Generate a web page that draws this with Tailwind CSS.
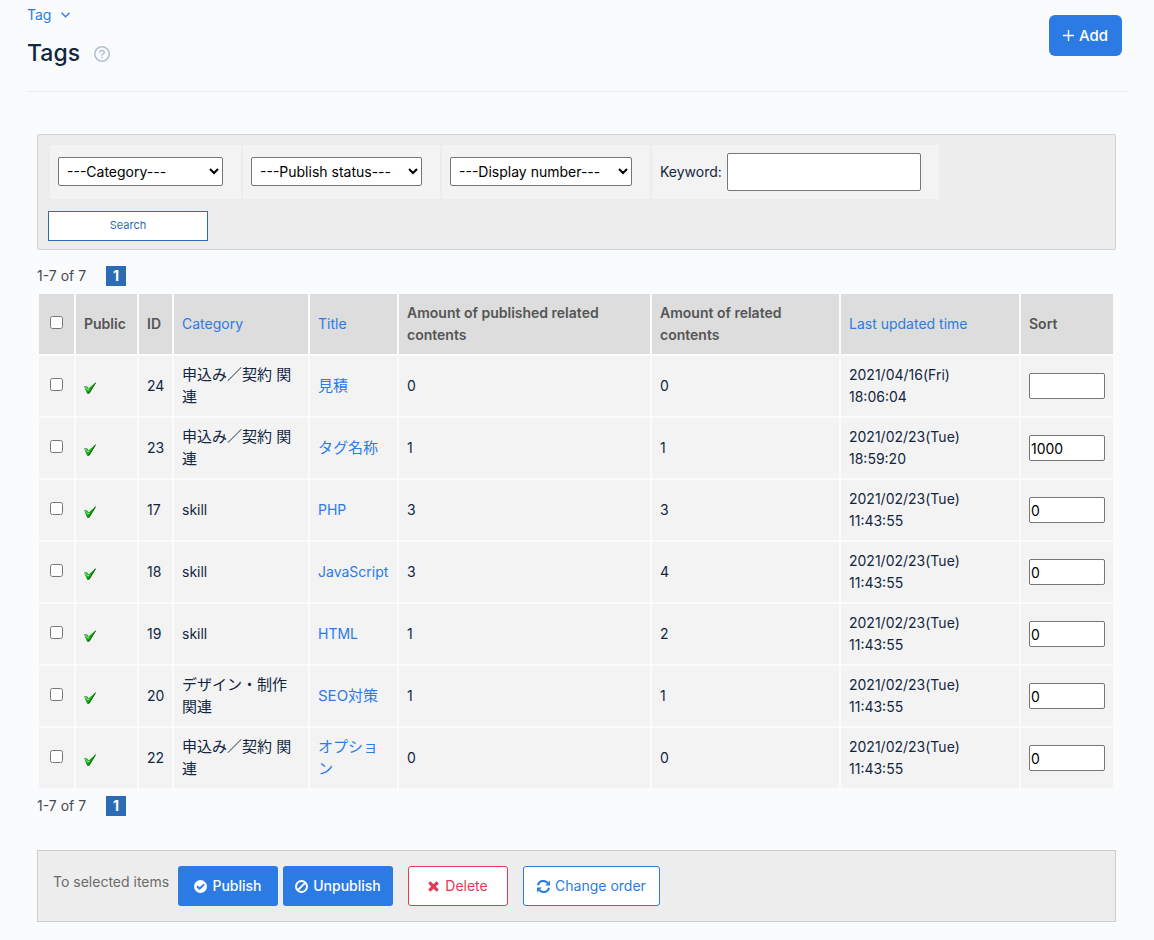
<!DOCTYPE html>
<html lang="en">
  <head>
    <meta charset="UTF-8" />
    <meta name="viewport" content="width=device-width, initial-scale=1.0" />
    <title>Tags</title>
    <script src="https://cdn.jsdelivr.net/npm/@tailwindcss/browser@4"></script>
  </head>
  <body
    class="bg-[#f9fbfd] font-['Inter','Noto_Sans_CJK_JP',sans-serif] text-sm text-[#12263f]"
  >
    <!-- Page header -->
    <header
      class="ml-[27px] mr-[26px] flex h-[92px] items-start justify-between border-b border-[#e3ebf6] pr-[6px]"
    >
      <div>
        <nav class="flex h-[30px] items-center">
          <a href="#" class="flex items-center gap-[10px] text-[#2c7be5]">
            Tag
            <svg class="h-[6px] w-[9px]" viewBox="0 0 9 6" fill="none">
              <path d="M0.5 0.8 4.5 4.8 8.5 0.8" stroke="currentColor" stroke-width="1.3" />
            </svg>
          </a>
        </nav>
        <div class="flex h-[46px] items-center gap-[14px]">
          <h1 class="text-[23px] font-medium">Tags</h1>
          <svg class="mt-[2px] h-4 w-4 text-[#b1c2d9]" viewBox="0 0 16 16" fill="none" stroke="currentColor">
            <circle cx="8" cy="8" r="7.2" stroke-width="1.6" />
            <path d="M5.7 6.5C5.7 3.7 10.3 3.8 10.3 6.4 10.3 7.9 8 8 8 9.7" stroke-width="1.6" />
            <path d="M8 10.8V12.2" stroke-width="1.6" />
          </svg>
        </div>
      </div>
      <button
        class="mt-[15px] flex h-[41px] items-center gap-[5px] rounded-md bg-[#2c7be5] px-[14px] text-[15px] font-medium text-white"
      >
        <svg class="h-[11px] w-[11px]" viewBox="0 0 11 11" fill="none" stroke="currentColor" stroke-width="1.4">
          <path d="M5.5 0V11M0 5.5H11" />
        </svg>
        Add
      </button>
    </header>

    <main class="ml-[37px] mr-[38px] mt-[42px]">
      <!-- Search filters -->
      <form class="rounded-xs border border-[#d2d2d2] bg-[#ededed] px-[10px] pt-[10px] pb-2">
        <div class="ml-[2px] flex gap-[2px]">
          <div class="flex h-[54px] items-center bg-[#f3f3f3] pb-[2px] pl-2 pr-[18px]">
            <select aria-label="Category" class="h-[29px] w-[165px] rounded-xs border border-[#767676] bg-white px-1 text-black">
              <option>---Category---</option>
            </select>
          </div>
          <div class="flex h-[54px] items-center bg-[#f3f3f3] pb-[2px] pl-2 pr-[18px]">
            <select aria-label="Publish status" class="h-[29px] w-[171px] rounded-xs border border-[#767676] bg-white px-1 text-black">
              <option>---Publish status---</option>
            </select>
          </div>
          <div class="flex h-[54px] items-center bg-[#f3f3f3] pb-[2px] pl-2 pr-[18px]">
            <select aria-label="Display number" class="h-[29px] w-[182px] rounded-xs border border-[#767676] bg-white px-1 text-black">
              <option>---Display number---</option>
            </select>
          </div>
          <div class="flex h-[54px] w-[287px] items-center justify-between bg-[#f3f3f3] pl-2 pr-[18px]">
            <label for="keyword">Keyword:</label>
            <input id="keyword" type="text" class="h-[38px] w-[194px] rounded-xs border border-[#767676] bg-white px-1" />
          </div>
        </div>
        <button class="mt-3 h-[30px] w-40 border border-[#2c6cb5] bg-white text-[11px] text-[#2c6cb5]">
          Search
        </button>
      </form>

      <!-- Pager -->
      <div class="mt-4 flex h-5 items-center gap-5 text-[#4a4a4a]">
        <span>1-7 of 7</span>
        <span class="flex h-5 w-5 items-center justify-center bg-[#2c6cb5] font-bold text-white">1</span>
      </div>

      <!-- Tag list -->
      <div class="mt-[6px] pr-px">
        <table
          class="w-full table-fixed border-separate border-spacing-[2px] text-left leading-[22px] [&_a]:text-[#2c7be5] [&_td]:h-[60px] [&_td]:bg-[#f3f3f3] [&_td]:px-2 [&_td]:py-0 [&_th]:h-[60px] [&_th]:bg-[#dddddd] [&_th]:px-2 [&_th]:py-0 [&_th]:font-semibold [&_th]:text-[#555555] [&_th_a]:font-normal [&_input[type=checkbox]]:mx-auto [&_input[type=checkbox]]:mb-1 [&_input[type=checkbox]]:block [&_input[type=text]]:h-[26px] [&_input[type=text]]:w-full [&_input[type=text]]:rounded-xs [&_input[type=text]]:border [&_input[type=text]]:border-[#767676] [&_input[type=text]]:bg-white [&_input[type=text]]:px-px [&_input[type=text]]:text-black [&_:lang(ja)]:text-[15px]"
        >
          <colgroup>
            <col class="w-[35px]" />
            <col class="w-[61px]" />
            <col class="w-[33px]" />
            <col class="w-[134px]" />
            <col class="w-[87px]" />
            <col />
            <col class="w-[187px]" />
            <col class="w-[178px]" />
            <col class="w-[92px]" />
          </colgroup>
          <thead>
            <tr>
              <th><input type="checkbox" aria-label="Select all" /></th>
              <th>Public</th>
              <th>ID</th>
              <th><a href="#">Category</a></th>
              <th><a href="#">Title</a></th>
              <th>Amount of published related contents</th>
              <th>Amount of related contents</th>
              <th><a href="#">Last updated time</a></th>
              <th>Sort</th>
            </tr>
          </thead>
          <tbody>
            <tr>
              <td><input type="checkbox" aria-label="Select 24" /></td>
              <td><svg class="mt-1 h-3 w-3"><use href="#check" /></svg></td>
              <td>24</td>
              <td lang="ja">申込み／契約 関連</td>
              <td lang="ja"><a href="#">見積</a></td>
              <td>0</td>
              <td>0</td>
              <td>2021/04/16(Fri)<br />18:06:04</td>
              <td><input type="text" aria-label="Sort 24" value="" /></td>
            </tr>
            <tr>
              <td><input type="checkbox" aria-label="Select 23" /></td>
              <td><svg class="mt-1 h-3 w-3"><use href="#check" /></svg></td>
              <td>23</td>
              <td lang="ja">申込み／契約 関連</td>
              <td lang="ja"><a href="#">タグ名称</a></td>
              <td>1</td>
              <td>1</td>
              <td>2021/02/23(Tue)<br />18:59:20</td>
              <td><input type="text" aria-label="Sort 23" value="1000" /></td>
            </tr>
            <tr>
              <td><input type="checkbox" aria-label="Select 17" /></td>
              <td><svg class="mt-1 h-3 w-3"><use href="#check" /></svg></td>
              <td>17</td>
              <td>skill</td>
              <td><a href="#">PHP</a></td>
              <td>3</td>
              <td>3</td>
              <td>2021/02/23(Tue)<br />11:43:55</td>
              <td><input type="text" aria-label="Sort 17" value="0" /></td>
            </tr>
            <tr>
              <td><input type="checkbox" aria-label="Select 18" /></td>
              <td><svg class="mt-1 h-3 w-3"><use href="#check" /></svg></td>
              <td>18</td>
              <td>skill</td>
              <td><a href="#">JavaScript</a></td>
              <td>3</td>
              <td>4</td>
              <td>2021/02/23(Tue)<br />11:43:55</td>
              <td><input type="text" aria-label="Sort 18" value="0" /></td>
            </tr>
            <tr>
              <td><input type="checkbox" aria-label="Select 19" /></td>
              <td><svg class="mt-1 h-3 w-3"><use href="#check" /></svg></td>
              <td>19</td>
              <td>skill</td>
              <td><a href="#">HTML</a></td>
              <td>1</td>
              <td>2</td>
              <td>2021/02/23(Tue)<br />11:43:55</td>
              <td><input type="text" aria-label="Sort 19" value="0" /></td>
            </tr>
            <tr>
              <td><input type="checkbox" aria-label="Select 20" /></td>
              <td><svg class="mt-1 h-3 w-3"><use href="#check" /></svg></td>
              <td>20</td>
              <td lang="ja">デザイン・制作 関連</td>
              <td lang="ja"><a href="#">SEO対策</a></td>
              <td>1</td>
              <td>1</td>
              <td>2021/02/23(Tue)<br />11:43:55</td>
              <td><input type="text" aria-label="Sort 20" value="0" /></td>
            </tr>
            <tr>
              <td><input type="checkbox" aria-label="Select 22" /></td>
              <td><svg class="mt-1 h-3 w-3"><use href="#check" /></svg></td>
              <td>22</td>
              <td lang="ja">申込み／契約 関連</td>
              <td lang="ja"><a href="#">オプション</a></td>
              <td>0</td>
              <td>0</td>
              <td>2021/02/23(Tue)<br />11:43:55</td>
              <td><input type="text" aria-label="Sort 22" value="0" /></td>
            </tr>
          </tbody>
        </table>
      </div>

      <!-- Pager -->
      <div class="mt-[6px] flex h-5 items-center gap-5 text-[#4a4a4a]">
        <span>1-7 of 7</span>
        <span class="flex h-5 w-5 items-center justify-center bg-[#2c6cb5] font-bold text-white">1</span>
      </div>

      <!-- Bulk actions -->
      <div class="mt-[34px] flex h-[72px] items-start border border-[#cccccc] bg-[#ededed] px-[15px] pt-[15px]">
        <span class="mr-2 w-[117px] whitespace-nowrap leading-8 text-[#6b6b6b]">To selected items</span>
        <button class="mr-[5px] flex h-10 w-[100px] items-center justify-center gap-[5px] rounded-[3px] bg-[#2c7be5] font-medium text-white">
          <svg class="h-[13px] w-[13px]" viewBox="0 0 13 13" fill="none">
            <circle cx="6.5" cy="6.5" r="6.5" fill="currentColor" />
            <path d="M3 6.2 5.6 8.7 10 4.4" stroke="#2c7be5" stroke-width="2" />
          </svg>
          Publish
        </button>
        <button class="mr-[15px] flex h-10 w-[110px] items-center justify-center gap-[5px] rounded-[3px] bg-[#2c7be5] font-medium text-white">
          <svg class="h-[13px] w-[13px]" viewBox="0 0 13 13" fill="none" stroke="currentColor" stroke-width="2">
            <circle cx="6.5" cy="6.5" r="5.5" />
            <path d="M2.6 10.4 10.4 2.6" />
          </svg>
          Unpublish
        </button>
        <button class="mr-[15px] flex h-10 w-[100px] items-center justify-center gap-[6px] rounded-[3px] border border-[#e63757] bg-white text-[#e63757]">
          <svg class="h-[11px] w-[11px]" viewBox="0 0 11 11" fill="none" stroke="currentColor" stroke-width="3.2">
            <path d="M1.3 1.3 9.7 9.7M9.7 1.3 1.3 9.7" />
          </svg>
          Delete
        </button>
        <button class="flex h-10 w-[137px] items-center justify-center gap-[5px] rounded-[3px] border border-[#2c7be5] bg-white text-[#2c7be5]">
          <svg class="h-[13px] w-[13px]" viewBox="0 0 13 13" fill="none">
            <path d="M1 5.2C2 0.6 7.8 -0.4 10.8 3M12 7.8C11 12.4 5.2 13.4 2.2 10" stroke="currentColor" stroke-width="2" />
            <path d="M13 0.6V5.4H8.2ZM0 12.4V7.6H4.8Z" fill="currentColor" />
          </svg>
          Change order
        </button>
      </div>
    </main>

    <!-- Shared published mark -->
    <svg class="hidden">
      <symbol id="check" viewBox="0 0 12 12">
        <path d="M0.5 4.3 3 4.3 4.6 6.6 11.6 0.4 11.2 1.8 5.2 11.2 3.2 11.2Z" fill="#0ca80c" />
        <path d="M3.2 11.2H5.2L11.6 0.6" fill="none" stroke="#075c07" />
        <path d="M0.5 4.3 3.2 11" fill="none" stroke="#3f9a3f" stroke-width="0.8" />
        <path d="M1.4 4.8 3.8 8 5.4 7.2" fill="none" stroke="#a5eca5" />
      </symbol>
    </svg>
  </body>
</html>
